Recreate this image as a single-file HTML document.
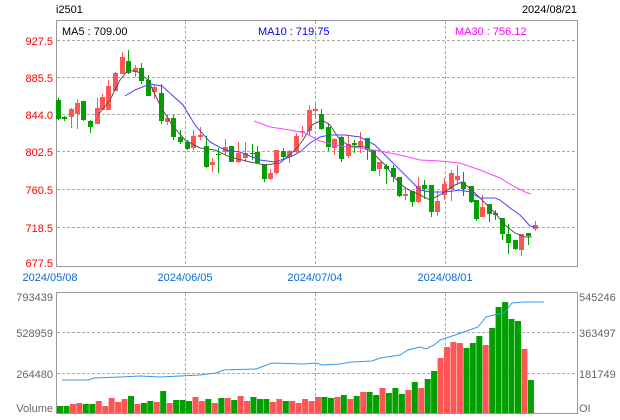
<!DOCTYPE html>
<html><head><meta charset="utf-8"><style>
body{margin:0;background:#fff;width:620px;height:420px;overflow:hidden}
svg{display:block;font-family:"Liberation Sans",sans-serif;font-size:11px}
</style></head><body>
<svg id="s" width="620" height="420" xmlns="http://www.w3.org/2000/svg">
<text x="56" y="13" fill="#000">i2501</text>
<text x="577" y="13" fill="#000" text-anchor="end">2024/08/21</text>
<rect x="56.5" y="20.5" width="521" height="246" fill="none" stroke="#999"/>
<rect x="56.5" y="292.5" width="521" height="121" fill="none" stroke="#999"/>
<g stroke="#aaa" stroke-dasharray="3,2">
<line x1="57" x2="577" y1="40.5" y2="40.5"/><line x1="57" x2="577" y1="77.5" y2="77.5"/><line x1="57" x2="577" y1="114.5" y2="114.5"/><line x1="57" x2="577" y1="151.5" y2="151.5"/><line x1="57" x2="577" y1="189.5" y2="189.5"/><line x1="57" x2="577" y1="227.5" y2="227.5"/>
<line x1="185.5" x2="185.5" y1="21" y2="266"/><line x1="315.5" x2="315.5" y1="21" y2="266"/><line x1="445.5" x2="445.5" y1="21" y2="266"/>
<line x1="57" x2="577" y1="332.5" y2="332.5"/><line x1="57" x2="577" y1="373.5" y2="373.5"/>
<line x1="185.5" x2="185.5" y1="293" y2="413"/><line x1="315.5" x2="315.5" y1="293" y2="413"/><line x1="445.5" x2="445.5" y1="293" y2="413"/>
</g>
<g fill="#f00" text-anchor="end">
<text x="53" y="45">927.5</text><text x="53" y="82">885.5</text><text x="53" y="119">844.0</text><text x="53" y="156">802.5</text><text x="53" y="194">760.5</text><text x="53" y="232">718.5</text><text x="53" y="267">677.5</text>
</g>
<text x="62" y="35" fill="#000">MA5 : 709.00</text>
<text x="258" y="35" fill="#00f">MA10 : 719.75</text>
<text x="455" y="35" fill="#f0f">MA30 : 756.12</text>
<g fill="#0a6ad0" text-anchor="middle">
<text x="50" y="281">2024/05/08</text><text x="185" y="281">2024/06/05</text><text x="315" y="281">2024/07/04</text><text x="445" y="281">2024/08/01</text>
</g>
<g fill="#666">
<text x="53" y="301" text-anchor="end">793439</text><text x="53" y="337" text-anchor="end">528959</text><text x="53" y="378" text-anchor="end">264480</text><text x="53" y="412" text-anchor="end">Volume</text>
<text x="579" y="301">545246</text><text x="579" y="337">363497</text><text x="579" y="378">181749</text><text x="579" y="412">OI</text>
</g>
<g id="c"></g>
</svg>
<script>
var C=[[58,'G',100,119,98,120],[64,'G',117,119,116,121],[71,'R',109,117,108,128],[77,'R',103,114,99,129],[83,'G',101,120,101,121],[90,'G',121,127,120,133],[97,'R',108,124,98,124],[102,'R',97,110,94,110],[108,'R',86,110,80,110],[115,'R',73,91,72,91],[122,'R',57,74,52,74],[128,'G',61,73,50,74],[135,'R',68,72,65,77],[141,'G',68,81,63,84],[148,'G',80,96,75,96],[154,'R',87,92,85,99],[161,'G',93,121,84,124],[167,'R',118,122,115,125],[173,'G',118,137,115,140],[180,'G',137,142,130,144],[187,'G',142,149,140,150],[193,'R',136,148,130,150],[200,'R',135,137,127,140],[206,'G',146,167,136,168],[212,'R',162,165,158,172],[218,'G',154,155,148,173],[225,'R',147,152,139,155],[231,'G',146,162,146,162],[238,'R',153,162,142,163],[245,'R',153,158,142,162],[252,'G',153,154,144,160],[257,'G',152,163,146,163],[264,'G',164,179,164,182],[270,'R',173,179,169,180],[276,'R',150,173,150,174],[283,'G',151,157,148,160],[289,'R',151,157,150,163],[296,'R',136,152,133,153],[302,'R',131,132,126,137],[309,'R',110,131,105,135],[315,'R',109,111,104,119],[321,'G',114,129,109,130],[328,'G',127,147,123,151],[334,'R',139,148,138,155],[341,'G',137,159,136,162],[348,'R',144,156,135,158],[354,'G',143,145,140,153],[360,'R',141,147,132,153],[367,'G',138,150,138,160],[373,'G',150,171,150,171],[379,'R',162,169,162,176],[386,'G',166,169,164,184],[393,'G',168,177,165,182],[399,'G',177,196,177,197],[405,'R',194,196,187,200],[412,'G',191,202,191,207],[418,'R',186,202,177,203],[424,'G',185,189,180,199],[431,'G',185,212,185,217],[437,'R',201,212,191,216],[444,'R',184,195,178,200],[451,'R',173,189,170,201],[457,'R',176,180,165,185],[463,'G',182,189,172,196],[471,'G',186,202,186,203],[476,'G',200,219,200,221],[482,'R',207,217,195,217],[489,'G',204,214,204,222],[495,'G',213,215,210,220],[502,'G',218,234,218,240],[508,'G',234,243,224,254],[515,'G',240,249,240,250],[521,'R',234,250,234,256],[528,'G',233,236,233,245],[535,'R',225,229,221,231]];
var V=[438,438,432,429,432,432,423,438,414,426,417,408,432,429,423,426,393,429,420,420,423,411,423,417,429,414,414,420,408,423,411,417,417,426,417,423,423,429,417,423,411,411,414,411,405,417,408,396,396,405,384,399,384,402,390,366,384,357,333,294,261,246,249,264,249,228,255,204,141,126,177,183,267,360,360,360];
var h='',col={R:'#ff5555',G:'#00a000'};
C.forEach(function(c,i){var f=col[c[1]];
h+='<line x1="'+(c[0]+.5)+'" x2="'+(c[0]+.5)+'" y1="'+c[4]+'" y2="'+c[5]+'" stroke="'+f+'"/>';
h+='<rect x="'+(c[0]-2)+'" y="'+c[2]+'" width="5" height="'+Math.max(1,c[3]-c[2])+'" fill="'+f+'"/>';
var vx=57+i*6.45,vt=260+V[i]/3;if(i<74)h+='<rect x="'+vx.toFixed(1)+'" y="'+vt.toFixed(1)+'" width="6" height="'+(413-vt).toFixed(1)+'" fill="'+f+'"/>';});
function pl(p,c){return '<polyline fill="none" stroke="'+c+'" stroke-width="1" points="'+p+'"/>';}
h+=pl('98,115 110,100 120,80 128,70 138,72 148,80 160,105 172,125 185,140 200,148 215,150 230,157 250,162 265,165 280,163 295,150 303,140 312,125 322,120 330,125 340,140 350,146 365,147 375,155 385,165 395,178 405,188 420,195 430,200 440,195 455,185 462,182 472,190 485,203 495,213 505,225 515,233 525,237 532,237','#555');
h+=pl('125,96 135,90 150,84 162,86 172,95 183,105 195,125 210,142 225,150 240,152 260,160 275,162 290,157 300,152 310,143 320,137 330,135 345,135 360,137 375,145 390,160 405,175 420,190 430,192 445,192 460,190 470,192 480,198 495,198 500,200 510,208 520,215 530,226 535,227','#4444ff');
h+=pl('254,121 270,127 290,130 305,133 320,141 340,146 360,148 380,151 400,155 420,160 440,161 460,163 480,170 500,178 515,187 525,192 531,194','#ff44ff');
h+=pl('62,380 88,380 94,378 120,377 140,376 160,377 200,375 216,373 224,370 256,369 272,363 304,364 316,363 322,365 340,364 352,362 372,361 380,358 400,355 408,350 420,347 426,349 434,345 440,340 464,332 478,327 486,317 498,314 504,313 512,303 524,302 544,302','#3399ee');
document.getElementById('c').innerHTML=h;
</script>
</body></html>
